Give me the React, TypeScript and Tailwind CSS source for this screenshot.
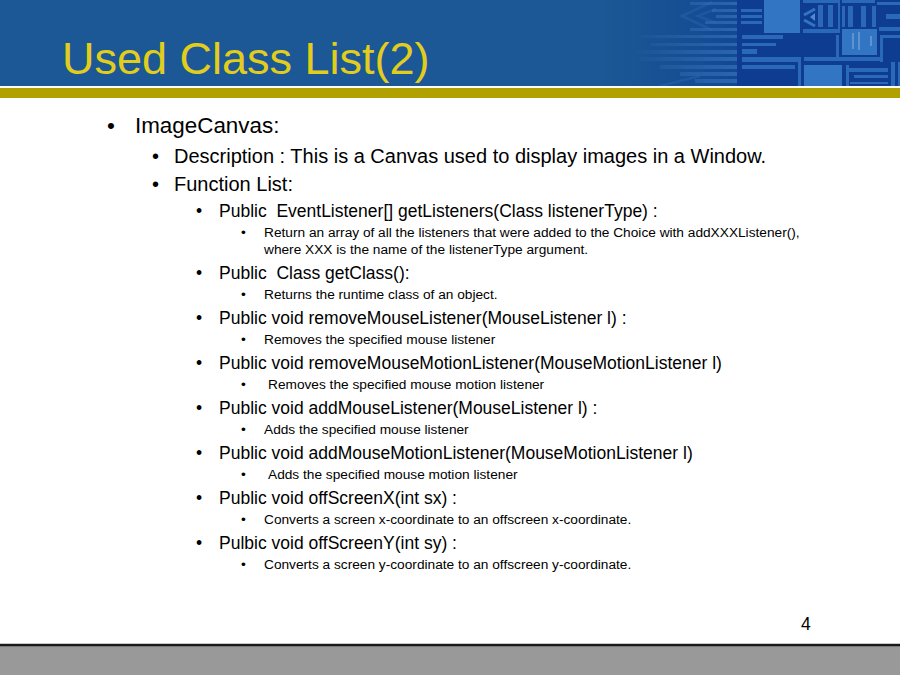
const items: { head: string; subs: string[]; indent?: boolean }[] = [
  {
    head: 'Public  EventListener[] getListeners(Class listenerType) :',
    subs: ['Return an array of all the listeners that were added to the Choice with addXXXListener(),', 'where XXX is the name of the listenerType argument.'],
  },
  { head: 'Public  Class getClass():', subs: ['Returns the runtime class of an object.'] },
  { head: 'Public void removeMouseListener(MouseListener l) :', subs: ['Removes the specified mouse listener'] },
  { head: 'Public void removeMouseMotionListener(MouseMotionListener l)', subs: ['Removes the specified mouse motion listener'], indent: true },
  { head: 'Public void addMouseListener(MouseListener l) :', subs: ['Adds the specified mouse listener'] },
  { head: 'Public void addMouseMotionListener(MouseMotionListener l)', subs: ['Adds the specified mouse motion listener'], indent: true },
  { head: 'Public void offScreenX(int sx) :', subs: ['Converts a screen x-coordinate to an offscreen x-coordinate.'] },
  { head: 'Pulbic void offScreenY(int sy) :', subs: ['Converts a screen y-coordinate to an offscreen y-coordinate.'] },
];

// [x, y, w, h] in page pixels, read off the reference
const bars = [
  [741, 9, 21, 3], [741, 15, 21, 3], [741, 21, 21, 3],
  [803, 0, 35, 3], [803, 29, 35, 4], [838, 0, 2, 33],
  [818, 5, 5, 22], [828, 5, 5, 22],
  [842, 0, 33, 3], [842, 6, 3, 21], [848, 6, 5, 21], [861, 6, 5, 21], [872, 6, 4, 21],
  [877, 2, 23, 3], [886, 14, 14, 5], [879, 27, 21, 4],
  [836, 35, 3, 22], [880, 35, 20, 3], [880, 35, 3, 27], [804, 57, 79, 4],
  [742, 35, 41, 4], [742, 43, 34, 3], [742, 49, 15, 5], [742, 57, 59, 5], [798, 57, 3, 29], [742, 65, 53, 4],
  [846, 65, 3, 21], [846, 68, 42, 4], [854, 75, 34, 3], [850, 82, 38, 2], [891, 62, 4, 24], [898, 62, 2, 24],
];

const blocks = [
  [764, 0, 36, 33], [842, 29, 35, 26], [804, 65, 38, 21],
];

// faded traces that run left from the dark panel
const traces = [
  [690, 2, 47, 3], [712, 9, 25, 3], [716, 15, 21, 3], [705, 21, 32, 3], [690, 28, 47, 3],
  [640, 35, 97, 3], [650, 43, 87, 3], [630, 50, 107, 4], [640, 57, 97, 4], [660, 65, 77, 4],
  [680, 72, 57, 4], [695, 79, 42, 4],
];

function Circuit() {
  return (
    <svg width="300" height="86" viewBox="600 0 300 86" className="absolute right-0 top-0">
      <defs>
        <linearGradient id="fade" gradientUnits="userSpaceOnUse" x1="600" x2="737" y1="0" y2="0">
          <stop offset="0" stopColor="#0e3c90" stopOpacity="0" />
          <stop offset="1" stopColor="#0e3c90" stopOpacity="0.55" />
        </linearGradient>
        <linearGradient id="trace" gradientUnits="userSpaceOnUse" x1="630" x2="737" y1="0" y2="0">
          <stop offset="0" stopColor="#3a76b8" stopOpacity="0" />
          <stop offset="1" stopColor="#2f6dba" stopOpacity="0.8" />
        </linearGradient>
        <filter id="soft" x="-5%" y="-5%" width="110%" height="110%">
          <feGaussianBlur stdDeviation="0.6" />
        </filter>
      </defs>
      <rect x="600" width="137" height="86" fill="url(#fade)" />
      <rect x="737" width="163" height="86" fill="#0e3c90" />
      <g filter="url(#soft)">
        <g fill="url(#trace)">
          {traces.map(([x, y, w, h]) => (
            <rect key={`${x}-${y}`} x={x} y={y} width={w} height={h} />
          ))}
        </g>
        <g fill="none" stroke="#2f6dba" strokeWidth="2.5" opacity="0.35">
          <path d="M712 2 L682 16 L712 30" />
          <path d="M716 9 L698 16 L716 23" />
          <path d="M660 86 L700 76" />
        </g>
        <g fill="#2a69b8">
          {bars.map(([x, y, w, h]) => (
            <rect key={`${x}-${y}-${w}`} x={x} y={y} width={w} height={h} />
          ))}
        </g>
        <g fill="#3174c2">
          {blocks.map(([x, y, w, h]) => (
            <rect key={`${x}-${y}`} x={x} y={y} width={w} height={h} />
          ))}
        </g>
        <g fill="none" stroke="#3174c2" strokeWidth="3">
          <path d="M815 9 L804 15" />
          <path d="M804 20 L815 26" />
        </g>
        <path d="M815 13 L810 17 L815 21 Z" fill="#4f8ad0" />
        <g fill="#5f93d0">
          <rect x="852" y="33" width="2" height="16" />
          <rect x="858" y="32" width="2" height="18" />
          <rect x="870" y="36" width="2" height="10" />
        </g>
      </g>
    </svg>
  );
}

export default function App() {
  return (
    <div className="relative flex h-[675px] w-[900px] flex-col overflow-hidden bg-white text-black [font-family:'Liberation_Sans',Arial,sans-serif]">
      <header className="relative h-[86px] shrink-0 bg-[#1b5895]">
        <Circuit />
        <h1 className="absolute left-[62px] top-[31px] whitespace-pre text-[45px] leading-[56px] text-[#e2cd1d]">Used Class List(2)</h1>
      </header>
      <div className="h-[2px] shrink-0 bg-white" />
      <div className="h-[10px] shrink-0 bg-[#b0a000]" />

      <main className="flex-1 pl-[107px] pt-[13px]">
        <div className="flex h-[30px] items-center text-[22.4px]">
          <span className="w-[28px]">•</span>
          <span>ImageCanvas:</span>
        </div>
        <div className="mt-[2px] pl-[45px] text-[20px]">
          <div className="flex h-[25px] items-center">
            <span className="w-[22px]">•</span>
            <span>Description : This is a Canvas used to display images in a Window.</span>
          </div>
          <div className="mt-[3px] flex h-[25px] items-center">
            <span className="w-[22px]">•</span>
            <span>Function List:</span>
          </div>
        </div>
        <div className="mt-[4px] pl-[89px]">
          {items.map((item) => (
            <div key={item.head} className="mb-[3px]">
              <div className="flex h-[23px] items-center whitespace-pre text-[17.5px]">
                <span className="w-[23px]">•</span>
                <span>{item.head}</span>
              </div>
              <div className="mt-[2px] pl-[45px] text-[13.7px]">
                {item.subs.map((line, i) => (
                  <div key={line} className="flex h-[17px] items-center whitespace-pre">
                    <span className={item.indent ? 'w-[27px]' : 'w-[23px]'}>{i === 0 ? '•' : ''}</span>
                    <span>{line}</span>
                  </div>
                ))}
              </div>
            </div>
          ))}
        </div>
      </main>

      <div className="absolute left-[801px] top-[614px] text-[17.5px] leading-[20px]">4</div>

      <div className="h-[1px] shrink-0 bg-[#c8c8c8]" />
      <div className="h-[2px] shrink-0 bg-[#1a1a1a]" />
      <div className="h-[1px] shrink-0 bg-[#777777]" />
      <footer className="h-[28px] shrink-0 bg-[#999999]" />
    </div>
  );
}
